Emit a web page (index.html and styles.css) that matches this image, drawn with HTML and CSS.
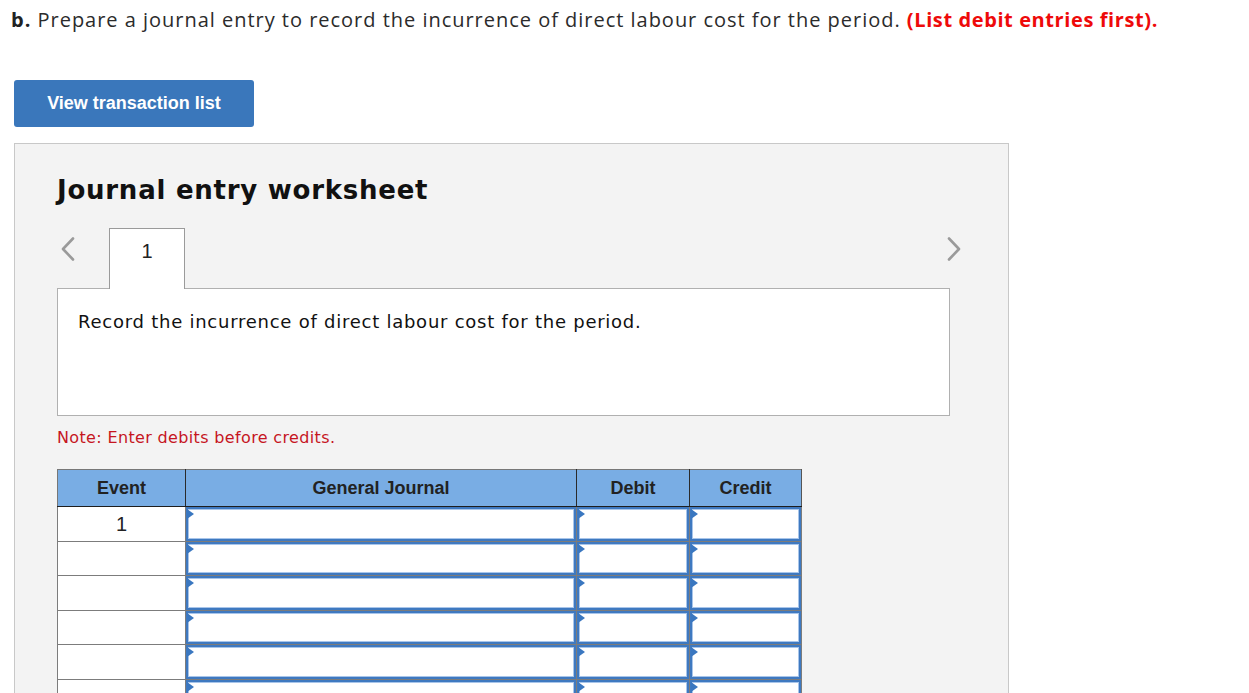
FILE: index.html
```html
<!DOCTYPE html>
<html>
<head>
<meta charset="utf-8">
<link rel="stylesheet" href="styles.css">
</head>
<body>
<p class="prompt"><b>b.</b> Prepare a journal entry to record the incurrence of direct labour cost for the period. <span class="hint">(List debit entries first).</span></p>
<button class="btn" type="button">View transaction list</button>
<section class="panel">
  <h2 class="title">Journal entry worksheet</h2>
  <div class="tabs">
    <span class="chev chev-left"><svg width="14" height="24" viewBox="0 0 14 24"><path d="M12 1.5 L2 12 L12 22.5" fill="none" stroke="#9a9a9a" stroke-width="2.6" stroke-linecap="round" stroke-linejoin="round"/></svg></span>
    <div class="tab">1</div>
    <span class="chev chev-right"><svg width="14" height="24" viewBox="0 0 14 24"><path d="M2 1.5 L12 12 L2 22.5" fill="none" stroke="#9a9a9a" stroke-width="2.6" stroke-linecap="round" stroke-linejoin="round"/></svg></span>
  </div>
  <div class="box">Record the incurrence of direct labour cost for the period.</div>
  <p class="note">Note: Enter debits before credits.</p>
  <table class="journal">
    <thead>
      <tr><th class="c-event">Event</th><th class="c-gj">General Journal</th><th class="c-dr">Debit</th><th class="c-cr">Credit</th></tr>
    </thead>
    <tbody>
      <tr><td class="ev">1</td><td class="in"><div class="inp"></div></td><td class="in"><div class="inp"></div></td><td class="in"><div class="inp"></div></td></tr>
      <tr><td class="ev"></td><td class="in"><div class="inp"></div></td><td class="in"><div class="inp"></div></td><td class="in"><div class="inp"></div></td></tr>
      <tr><td class="ev"></td><td class="in"><div class="inp"></div></td><td class="in"><div class="inp"></div></td><td class="in"><div class="inp"></div></td></tr>
      <tr><td class="ev"></td><td class="in"><div class="inp"></div></td><td class="in"><div class="inp"></div></td><td class="in"><div class="inp"></div></td></tr>
      <tr><td class="ev"></td><td class="in"><div class="inp"></div></td><td class="in"><div class="inp"></div></td><td class="in"><div class="inp"></div></td></tr>
      <tr><td class="ev"></td><td class="in"><div class="inp"></div></td><td class="in"><div class="inp"></div></td><td class="in"><div class="inp"></div></td></tr>
      <tr><td class="ev"></td><td class="in"><div class="inp"></div></td><td class="in"><div class="inp"></div></td><td class="in"><div class="inp"></div></td></tr>
    </tbody>
  </table>
</section>
</body>
</html>
```
FILE: styles.css
```css
html, body {
  margin: 0;
  padding: 0;
  background: #ffffff;
  overflow: hidden;
}
body {
  padding: 0 0 0 11px;
  font-family: "Open Sans", "Liberation Sans", sans-serif;
}
.prompt {
  margin: 0;
  padding-top: 6px;
  height: 74px;
  font-family: "Open Sans", "Lato", sans-serif;
  font-size: 20px;
  line-height: 28px;
  color: #2b2b2b;
  letter-spacing: 0.98px;
  white-space: nowrap;
}
.prompt b {
  font-weight: 700;
  color: #222;
}
.hint {
  color: #ee0a0a;
  font-weight: 700;
  letter-spacing: 0.6px;
}
.btn {
  display: block;
  margin: 0 0 16px 3px;
  width: 240px;
  height: 47px;
  border: none;
  border-radius: 3px;
  background: #3a77bb;
  color: #ffffff;
  font-family: "Liberation Sans", Arial, sans-serif;
  font-weight: 700;
  font-size: 18px;
  padding: 0;
}
.panel {
  margin-left: 3px;
  width: 951px;
  height: 600px;
  background: #f3f3f3;
  border: 1px solid #c8c8c8;
  padding: 28px 0 0 42px;
}
.title {
  margin: 0;
  font-family: "DejaVu Sans", Verdana, sans-serif;
  font-weight: 700;
  font-size: 26px;
  line-height: 36px;
  color: #111;
  letter-spacing: 0.75px;
}
.tabs {
  margin-top: 20px;
  width: 904px;
  height: 60px;
  display: flex;
  align-items: flex-start;
}
.chev {
  display: block;
  width: 14px;
  height: 24px;
  margin-top: 9px;
}
.chev-left {
  margin-left: 4px;
}
.chev-right {
  margin-left: auto;
}
.chev svg {
  display: block;
}
.tab {
  position: relative;
  z-index: 1;
  margin-left: 34px;
  width: 76px;
  height: 61px;
  box-sizing: border-box;
  background: #fff;
  border: 1px solid #9a9a9a;
  border-bottom: none;
  text-align: center;
  font-family: "Liberation Sans", Arial, sans-serif;
  font-size: 20px;
  line-height: 24px;
  padding-top: 10px;
  color: #222;
}
.box {
  width: 893px;
  height: 128px;
  box-sizing: border-box;
  background: #fff;
  border: 1px solid #b0b0b0;
  padding: 21px 0 0 20px;
  font-family: "DejaVu Sans", Verdana, sans-serif;
  font-size: 18px;
  line-height: 24px;
  letter-spacing: 0.75px;
  color: #111;
}
.note {
  margin: 12px 0 0 0;
  font-family: "DejaVu Sans", Verdana, sans-serif;
  font-size: 16px;
  line-height: 19px;
  letter-spacing: 0.35px;
  color: #c6161f;
}
.journal {
  margin-top: 22px;
  border-collapse: collapse;
  table-layout: fixed;
  width: 744px;
  font-family: "Liberation Sans", Arial, sans-serif;
}
.journal th {
  background: #79ade4;
  height: 36px;
  padding: 0;
  font-size: 18px;
  font-weight: 700;
  color: #222;
  border-top: 1px solid #777;
  border-left: 1px solid #2a2a2a;
  border-right: 1px solid #2a2a2a;
  border-bottom: 1px solid #1e1e1e;
}
.journal th.c-event { width: 127px; border-left-color: #777; }
.journal th.c-gj { width: 390px; }
.journal th.c-dr { width: 112px; }
.journal th.c-cr { width: 111px; border-right-color: #555; }
.journal td {
  height: 33.5px;
  padding: 0;
  border: 1px solid #7c7c7c;
  background: #fff;
  vertical-align: top;
}
.journal td.ev {
  text-align: center;
  font-size: 20px;
  line-height: 30px;
  padding-top: 2px;
  height: 31.5px;
  color: #222;
}
.journal td.in {
  background: #fff;
}
.inp {
  position: relative;
  height: 29.5px;
  border: 2px solid #3f79c0;
  box-shadow: inset 0 0 0 1px #a8c5ea;
  background: #fff;
}
.inp::before {
  content: "";
  position: absolute;
  left: -1px;
  top: 0;
  width: 0;
  height: 0;
  border-left: 7px solid #3a77c0;
  border-top: 5px solid transparent;
  border-bottom: 5px solid transparent;
}
```
